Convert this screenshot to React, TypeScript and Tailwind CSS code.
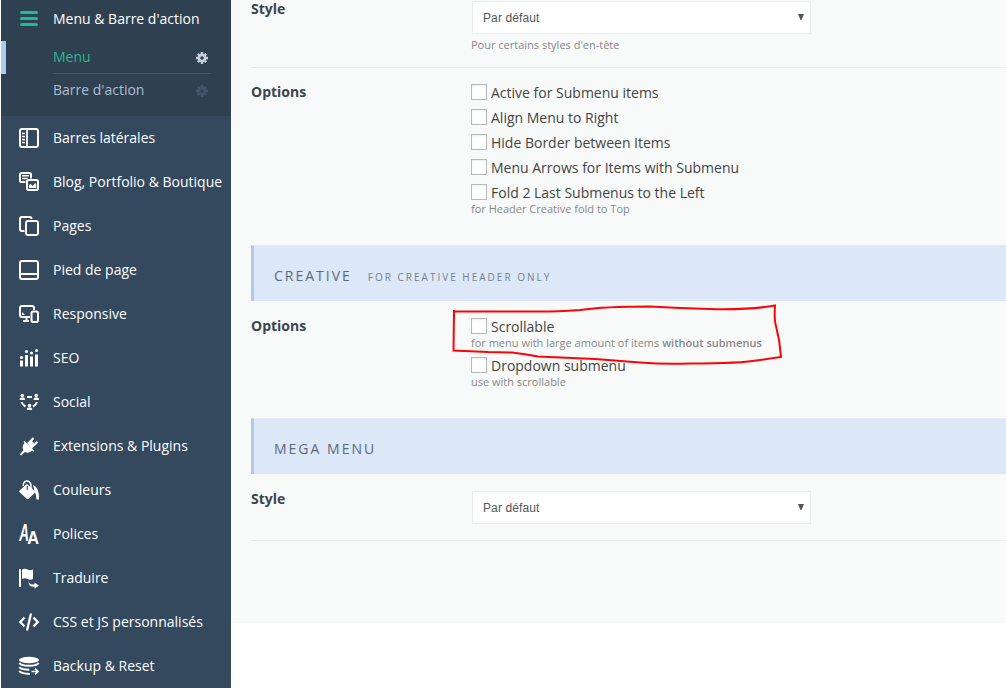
import type { ReactNode } from "react";

const stroke = { fill: "none", stroke: "currentColor", strokeWidth: 2 };

function Icon({ children }: { children: ReactNode }) {
  return (
    <svg viewBox="0 0 20 20" className="h-5 w-5 shrink-0 overflow-visible" fill="currentColor">
      {children}
    </svg>
  );
}

const items: { label: string; icon: ReactNode }[] = [
  {
    label: "Barres latérales",
    icon: (
      <>
        <rect x="1" y="1" width="18" height="18" rx="2" {...stroke} />
        <path d="M8 1v18" {...stroke} strokeWidth={1.8} />
        <path d="M3 5.500h3M3 8.500h3M3 11.500h3M3 14.500h3" {...stroke} strokeWidth={1.5} />
      </>
    ),
  },
  {
    label: "Blog, Portfolio & Boutique",
    icon: (
      <>
        <path d="M6.500 10H2.500Q1 10 1 8.500V2.500Q1 1 2.500 1h8Q12 1 12 2.500V6.500" {...stroke} />
        <path d="M3 3.800h7M3 6.500h5.500" {...stroke} strokeWidth={1.500} />
        <rect x="8" y="8" width="11" height="10" rx="1.800" {...stroke} />
        <path d="M10 16v-3l1.500-1 2.200 2 2.500-3 1 1v4z" />
      </>
    ),
  },
  {
    label: "Pages",
    icon: (
      <>
        <path d="M5.500 15H3Q1 15 1 13V3Q1 1 3 1h7.500Q12.500 1 12.500 3" {...stroke} />
        <rect x="7" y="5" width="12" height="14" rx="2" {...stroke} />
      </>
    ),
  },
  {
    label: "Pied de page",
    icon: (
      <>
        <rect x="1" y="1" width="18" height="18" rx="2" {...stroke} />
        <path d="M1 14h18" {...stroke} />
      </>
    ),
  },
  {
    label: "Responsive",
    icon: (
      <>
        <path d="M11 13H3Q1 13 1 11V4Q1 2 3 2h10Q15 2 15 4v2M7.500 13v4M4 17h6" {...stroke} />
        <path d="M3 8v3h3z" />
        <rect x="12.500" y="7.500" width="6.500" height="10.500" rx="1.800" {...stroke} />
      </>
    ),
  },
  {
    label: "SEO",
    icon: (
      <>
        <path d="M2.500 12.500v6M7.500 7v11.500M12.500 8.500v10M17.500 6.500v12" {...stroke} strokeWidth={3} />
        <circle cx="2.500" cy="9.500" r="1.600" />
        <circle cx="7.500" cy="3.500" r="1.600" />
        <circle cx="12.500" cy="5" r="1.600" />
        <circle cx="17.500" cy="2.500" r="1.600" />
      </>
    ),
  },
  {
    label: "Social",
    icon: (
      <>
        {[
          [3.3, 3.5],
          [17.3, 3.5],
          [10.5, 13.5],
        ].map(([x, y]) => (
          <g key={x}>
            <circle cx={x} cy={y} r="1.800" />
            <path d={`M${x - 2.6} ${y + 4.5}v-1.200q0-1.500 2.600-1.500t2.600 1.500v1.200z`} />
          </g>
        ))}
        <path d="M8 5h5M2.500 10q1 3 4 4.500M18 10q-1 3-4 4.500" {...stroke} strokeWidth={2} />
      </>
    ),
  },
  {
    label: "Extensions & Plugins",
    icon: (
      <>
        <path d="M6 6.500 13.500 14Q10.500 18 6 16L2 19.500.800 18.300 4.300 14.500Q2.300 10 6 6.500z" />
        <path d="M5 5.500 14.800 15.300" {...stroke} strokeWidth={1.500} />
        <path d="M9.300 7.500 14.500 2M13 11 18.500 5.800" {...stroke} strokeWidth={2.200} />
        <path d="M8 7l5-2 2.500 2.500L13 13z" />
      </>
    ),
  },
  {
    label: "Couleurs",
    icon: (
      <>
        <path d="M8 3.800 16.500 12l-6.800 6.800q-1 .8-2 0L.500 12q-.7-.8 0-1.600z" />
        <path d="M4.300 6V4.500Q5 1 8 1t4 4v4" {...stroke} strokeWidth={1.500} />
        <path d="M8.300 6v4" fill="none" stroke="#34495e" strokeWidth="1.100" />
        <path d="M14 5q6.500 2.500 6 14.500h-2.500q-.2-5-2-8.500z" />
      </>
    ),
  },
  {
    label: "Polices",
    icon: (
      <g fontFamily="Liberation Sans, sans-serif" fontWeight="700">
        <text transform="translate(0.300 17) scale(.560 1)" fontSize="24" fontStyle="italic">A</text>
        <text transform="translate(8.300 20) scale(.930 1)" fontSize="17.500">A</text>
      </g>
    ),
  },
  {
    label: "Traduire",
    icon: (
      <>
        <path d="M0 1h2v18H0zM3 1.500q3-1.500 5.500 0t5.500 0V11q-3 1.500-5.500 0T3 11z" />
        <path d="M9.500 13q1 4 6 3.300v-1.800l4.500 3.200-4.500 2.800v-1.700q-6 .5-6-5.800z" />
      </>
    ),
  },
  {
    label: "CSS et JS personnalisés",
    icon: <path d="M5.500 5.500 1.300 10l4.200 4.500M14.500 5.500l4.200 4.500-4.200 4.500M12 1.500 8 18.500" {...stroke} strokeWidth={2.300} />,
  },
  {
    label: "Backup & Reset",
    icon: (
      <>
        <ellipse cx="10" cy="4" rx="10" ry="3.300" />
        <path d="M.3 7q2 2.800 9.700 2.800t9.700-2.800M.3 11.200q2 2.600 10 2.600M.3 15q2 2.900 10.500 2.900" {...stroke} />
        <path d="M12.500 15.500h5.500M16 12.700l3 2.800-3 2.800" {...stroke} strokeWidth={1.600} />
      </>
    ),
  },
];

function Gear() {
  return (
    <svg viewBox="0 0 12 12" className="h-3 w-3" fill="none" stroke="currentColor">
      <circle cx="6" cy="6" r="3.100" strokeWidth="2.600" />
      <path d="M6 0v2.500M6 9.500V12M0 6h2.500M9.500 6H12M1.800 1.800l1.700 1.700M8.500 8.500l1.700 1.700M1.800 10.200l1.700-1.700M8.500 3.500l1.700-1.700" strokeWidth="2.400" />
    </svg>
  );
}

function Sidebar() {
  return (
    <aside className="h-[688px] w-[230px] shrink-0 bg-[#34495e] text-white">
      <div className="h-[116px] bg-[#2f4051]">
        <div className="flex h-[41px] items-start pl-[19px] pt-[9px]">
          <svg viewBox="0 0 18 16" className="mt-[2px] h-4 w-[18px] text-[#1abc9c]" {...stroke} strokeWidth={3} strokeLinecap="round">
            <path d="M1.500 1.500h15M1.500 7.500h15M1.500 13.500h15" />
          </svg>
          <span className="ml-[15px] leading-5">Menu &amp; Barre d'action</span>
        </div>
        <div className="flex h-[33px] border-l-[5px] border-[#a9cdf0] pl-[47px] text-[#1fbb94]">
          <div className="flex w-[158px] items-center justify-between border-b border-[#43566a] pr-[3px]">
            <span className="pb-[2px]">Menu</span>
            <span className="pt-px text-[#c5d0dc]"><Gear /></span>
          </div>
        </div>
        <div className="flex h-[33px] w-[207px] items-center justify-between pl-[52px] text-[#aabed2]">
          <span className="pb-[2px]">Barre d'action</span>
          <span className="text-[#43566b]"><Gear /></span>
        </div>
      </div>
      {items.map((it) => (
        <div key={it.label} className="flex h-11 items-center gap-[14px] whitespace-nowrap pl-[18px]">
          <Icon>{it.icon}</Icon>
          <span className="pb-[2px]">{it.label}</span>
        </div>
      ))}
    </aside>
  );
}

function Select() {
  return (
    <div className="ml-px flex h-[33px] w-[339px] items-center justify-between border border-[#ebedec] bg-white pl-[10px] pr-[6px] font-['Liberation_Sans',sans-serif] text-[12px] tracking-[0.12px] text-[#555]">
      <span>Par défaut</span>
      <svg viewBox="0 0 6 6" className="mb-[2px] h-[6px] w-[6px]" fill="#555"><path d="M0 0h6L3.500 6h-1z" /></svg>
    </div>
  );
}

function Check({ label }: { label: string }) {
  return (
    <div className="flex h-[25px] items-center gap-1 text-[#444]">
      <span className="mb-[2px] h-4 w-4 border border-[#b4b9be] bg-white shadow-[inset_0_1px_2px_rgba(0,0,0,0.07)]" />
      <span>{label}</span>
    </div>
  );
}

function Hint({ children }: { children: ReactNode }) {
  return <p className="text-[11px] leading-[14px] text-[#888]">{children}</p>;
}

function Heading({ title, note }: { title: string; note?: string }) {
  return (
    <div className="flex h-14 items-baseline gap-4 border-l-[3px] border-t border-l-[#b4c8e1] border-t-[#e8ebea] bg-[#dce7f7] pl-5 pt-5 uppercase text-[#5b6b7d]">
      <span className="text-[14px] leading-5 tracking-[2px]">{title}</span>
      {note && <span className="text-[10px] tracking-[2px] text-[#75818f]">{note}</span>}
    </div>
  );
}

function Row({ label, className, labelClass = "", children }: { label: string; className: string; labelClass?: string; children: ReactNode }) {
  return (
    <div className={`flex ${className}`}>
      <div className={`w-[220px] shrink-0 font-bold leading-5 text-[#3b444f] ${labelClass}`}>{label}</div>
      <div>{children}</div>
    </div>
  );
}

function ScribbleMark() {
  return (
    <svg viewBox="0 0 340 70" className="pointer-events-none absolute -left-[21px] -top-[18px] h-[70px] w-[340px]" fill="none" stroke="#fb0408" strokeWidth="2">
      <path d="M4 14 3.500 54.500 38 56 62 56.500Q75 58 88 60.500L145 63Q170 65 190 66.500 215 68.500 240 67.500 290 67.500 310 64L331 61Q330 45 326 30 324 24 325 9.500 300 14 260 13 230 12 200 10.500 155 10.500 130 14 100 16 85 15.500L5 15.500" />
    </svg>
  );
}

export default function App() {
  return (
    <div className="flex h-[691px] w-[1006px] overflow-hidden bg-white pl-px font-['Open_Sans',sans-serif] text-[14px]">
      <Sidebar />
      <main className="h-[623px] flex-1 bg-[#f8faf9] pl-5">
        <Row label="Style" className="h-[68px] border-b border-[#e8ebea]" labelClass="-mt-px">
          <div className="pt-px">
            <Select />
            <div className="pt-1"><Hint>Pour certains styles d'en-tête</Hint></div>
          </div>
        </Row>
        <Row label="Options" className="h-[177px] pt-[14px]">
          <div className="-mt-[2px]">
            <Check label="Active for Submenu items" />
            <Check label="Align Menu to Right" />
            <Check label="Hide Border between Items" />
            <Check label="Menu Arrows for Items with Submenu" />
            <Check label="Fold 2 Last Submenus to the Left" />
            <div className="-mt-[3px]"><Hint>for Header Creative fold to Top</Hint></div>
          </div>
        </Row>
        <Heading title="Creative" note="for creative header only" />
        <Row label="Options" className="h-[117px] pt-[15px]">
          <div className="relative -mt-[2px]">
            <Check label="Scrollable" />
            <div className="-mt-[3px]">
              <Hint>for menu with large amount of items <b className="font-semibold">without submenus</b></Hint>
            </div>
            <div className="mt-[3px]"><Check label="Dropdown submenu" /></div>
            <div className="-mt-[3px]"><Hint>use with scrollable</Hint></div>
            <ScribbleMark />
          </div>
        </Row>
        <Heading title="Mega Menu" />
        <Row label="Style" className="h-[67px] border-b border-[#e8ebea] pt-[15px]">
          <div className="pt-[2px]"><Select /></div>
        </Row>
      </main>
    </div>
  );
}
